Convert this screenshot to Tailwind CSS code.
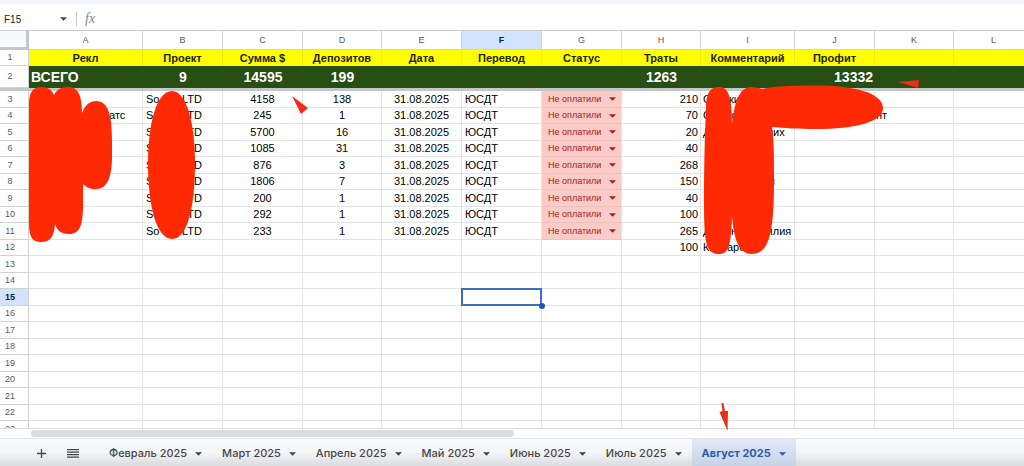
<!DOCTYPE html>
<html lang="ru">
<head>
  <meta charset="UTF-8" />
  <meta name="viewport" content="width=device-width, initial-scale=1.0"/>
  <title>Август 2025</title>
  <script src="https://cdn.jsdelivr.net/npm/@tailwindcss/browser@4"></script>
</head>
<body class="relative flex flex-col h-screen overflow-hidden bg-white font-['Liberation_Sans',Arial,sans-serif] text-black">

  <!-- Formula bar -->
  <div class="h-1 shrink-0 bg-[#f3f7fc]"></div>
  <div class="flex items-center h-[27px] shrink-0 pt-1 pl-1 border-b border-[#c9cbcd]">
    <input type="text" aria-label="Ячейка" value="F15" class="w-14 text-[10px] text-[#202124] outline-none"/>
    <svg class="w-[7px] h-[4px]" viewBox="0 0 6 3"><path d="M0 0h6L3 3z" fill="#444746"/></svg>
    <div class="w-px h-[14px] ml-[9px] bg-[#c7c9cc]"></div>
    <span class="ml-2 font-['Liberation_Serif',serif] italic text-sm leading-4 text-[#80868b]">fx</span>
  </div>

  <!-- Grid -->
  <main class="flex-1 min-h-0 overflow-hidden">
    <table class="table-fixed w-full border-separate border-spacing-0 text-[11px] leading-[15px] whitespace-nowrap">
      <colgroup>
        <col class="w-[29px]"/><col class="w-[114px]"/><col class="w-20"/><col class="w-20"/><col class="w-[79px]"/><col class="w-20"/><col class="w-20"/><col class="w-20"/><col class="w-[79px]"/><col class="w-[94px]"/><col class="w-20"/><col class="w-[79px]"/><col class="w-20"/>
      </colgroup>
      <thead id="head"></thead>
      <tbody id="rows"></tbody>
    </table>
  </main>

  <!-- Horizontal scrollbar -->
  <div class="h-[10px] shrink-0 flex items-center pl-[31px] border-t border-[#dadce0]">
    <div class="w-[483px] h-[7px] rounded-full bg-[#dadcdd]"></div>
  </div>

  <!-- Sheet tabs -->
  <footer class="flex items-stretch h-7 shrink-0 border-t border-[#e1e4e8] bg-linear-to-b from-[#f9fbfd] via-[#f3f5f8] to-[#d9dbde] font-[Inter,sans-serif] text-[11px] font-medium text-[#444746]">
    <button aria-label="Добавить лист" class="w-8 ml-[25px] pt-[2px] flex items-center justify-center">
      <svg class="w-[9px] h-[9px]" viewBox="0 0 9 9" fill="none" stroke="#444746" stroke-width="1.3"><path d="M4.500 0v9M0 4.500h9"/></svg>
    </button>
    <button aria-label="Все листы" class="w-8 pt-[2px] flex items-center justify-center">
      <svg class="w-[12px] h-[9px]" viewBox="0 0 12 9" fill="none" stroke="#444746" stroke-width="1.200"><path d="M0 .7h12M0 3.200h12M0 5.700h12M0 8.200h12"/></svg>
    </button>
    <nav id="tabs" class="flex items-stretch ml-[10px]"></nav>
  </footer>

  <!-- Red marker strokes and arrows -->
  <svg class="absolute left-0 top-0 w-[1024px] h-[466px] pointer-events-none" viewBox="0 0 1024 466" fill="#ff2a04">
    <path d="M29 104C29 92 33 87 41 87C48 87 52 90 54 95C57 89 62 87 68 87C77 87 82 93 82 113C85 105 90 101 96 101C107 101 112 112 112 140V156C112 178 107 189 96 189C90 189 86 187 83 184V205C83 225 80 234 69 234C62 234 57 231 55 224C54 236 51 242 41 242C33 242 29 238 29 224Z"/>
    <path d="M172 91C187 91 195 125 195 163C195 205 188 239 172 239C156 239 148 205 148 163C148 125 156 91 172 91Z"/>
    <path d="M706 108C706 92 711 87 719 87C727 87 732 93 732 124C735 98 741 87 751 87C755 87 759 88 762 89C775 86 794 85.500 815 85.500C855 85.500 883 93 883 108C883 122 856 129 815 129C800 129 784 128 772 127C774 142 774 155 774 180C774 230 770 254 752 254C740 254 734 242 732 216C731 245 729 254 719 254C707 254 704 246 704 205C704 165 705 130 706 108Z"/>
    <g fill="#ee2d17">
      <path d="M292 96l16 12-7 6z"/>
      <path d="M898 82l21-2-1 8z"/>
      <path d="M721.500 403h2l1.500 8 3 0-.5 20-8-19 3-1z"/>
    </g>
  </svg>

  <script>
    const CARET = '<svg class="w-[7px] h-[4px] shrink-0" viewBox="0 0 6 3"><path d="M0 0h6L3 3z" fill="currentColor"/></svg>';
    const letters = 'ABCDEFGHIJKL'.split('');
    const titles = ['Рекл', 'Проект', 'Сумма $', 'Депозитов', 'Дата', 'Перевод', 'Статус', 'Траты', 'Комментарий', 'Профит', '', ''];
    const totals = ['ВСЕГО', '9', '14595', '199', '', '', '', '1263', '', '13332', '', ''];

    // sum, deposits, spent
    const data = [
      [4158, 138, 210], [245, 1, 70], [5700, 16, 20], [1085, 31, 40], [876, 3, 268],
      [1806, 7, 150], [200, 1, 40], [292, 1, 100], [233, 1, 265]
    ];
    const names = {
      3: '<span class="inline-block w-[23px]"></span>а',
      4: '<span class="inline-block w-[78px]"></span>атс'
    };
    const notes = {
      3: '<span class="inline-block w-[26px]">С</span>ки',
      4: '<span class="inline-block w-[28px]">С</span><span class="inline-block w-[145px]">о</span>нт',
      5: '<span class="inline-block w-[64px]">Д</span>них',
      8: '<span class="inline-block w-[66px]"></span>я',
      11: '<span class="inline-block w-[28px]">Д</span><span class="inline-block w-[28px]">н</span>милия',
      12: '<span class="inline-block w-[24px]">К</span>аро'
    };

    const LINE = 'p-0 border-r border-b border-[#e2e3e3]';
    const GUTTER = 'p-0 pr-2 border-r border-b border-[#d0d2d4] text-[9px] text-center';

    const num = n => `<th scope="row" class="${GUTTER} ${n === 15 ? 'bg-[#d3e3fd] font-bold text-[#041e49]' : 'bg-white font-normal text-[#575b5f]'}">${n}</th>`;
    const cell = (html, cls = '') => `<td class="${LINE} ${cls}">${html}</td>`;

    document.getElementById('head').innerHTML =
      '<tr class="h-[19px]"><td class="p-0 bg-[#f8f9fa] border-r-3 border-b-3 border-[#c4c6c8]"></td>' +
      letters.map(l => `<th scope="col" class="p-0 border-r border-b border-[#d0d2d4] text-[9px] ${l === 'F' ? 'bg-[#d3e3fd] font-bold text-[#041e49]' : 'bg-white font-normal text-[#575b5f]'}">${l}</th>`).join('') +
      '</tr>';

    let html = '<tr class="h-4">' + num(1) +
      titles.map(t => `<th scope="col" class="p-0 border-r border-[#eded10] bg-[#ffff00] text-[11px] font-bold text-[#222200]">${t}</th>`).join('') + '</tr>';

    html += '<tr class="h-[22px]">' + num(2) +
      totals.map((t, i) => `<td class="p-0 bg-[#274e13] text-sm leading-5 font-bold text-white ${i === 0 ? 'pl-[2px]' : i === 9 ? 'text-right pr-[2px]' : 'text-center'}">${t}</td>`).join('') + '</tr>';

    // frozen rows divider
    html += '<tr class="h-[3px]"><td colspan="13" class="p-0 h-[3px] bg-[#c4c6c8]"></td></tr>';

    for (let n = 3; n <= 23; n++) {
      const d = data[n - 3];
      html += `<tr class="${n % 2 ? 'h-[17px]' : 'h-4'}">` + num(n);
      html += cell(names[n] || '', 'pl-[2px]');
      html += cell(d ? '<div class="flex justify-between w-[56px]"><span>So</span><span>LTD</span></div>' : '', 'pl-[3px]');
      html += cell(d ? d[0] : '', 'text-center');
      html += cell(d ? d[1] : '', 'text-center');
      html += cell(d ? '31.08.2025' : '', 'text-center');
      if (n === 15) {
        html += cell('<div class="absolute -left-px -top-px -right-px -bottom-px border-2 border-[#3a6fc4]"></div><div class="absolute -right-1 -bottom-1 w-[6px] h-[6px] rounded-full bg-[#1a57b8]"></div>', 'relative');
      } else {
        html += cell(d ? 'ЮСДТ' : '', 'pl-[3px]');
      }
      html += d
        ? cell(`<div class="flex items-center pl-[6px] pr-[5px] text-[#a5201c]"><select aria-label="Статус, строка ${n}" class="flex-1 min-w-0 appearance-none text-[9px] leading-[15px] outline-none"><option>Не оплатили</option></select>${CARET}</div>`, 'bg-[#fbcbc8] border-b-[#efc0bd]')
        : cell('');
      html += cell(d ? d[2] : n === 12 ? '100' : '', 'text-right pr-[2px]');
      html += cell(notes[n] || '', 'pl-[2px]');
      html += cell('') + cell('') + cell('') + '</tr>';
    }
    document.getElementById('rows').innerHTML = html;

    const months = ['Февраль', 'Март', 'Апрель', 'Май', 'Июнь', 'Июль', 'Август'];
    document.getElementById('tabs').innerHTML = months.map(m =>
      `<button class="flex items-center gap-2 pt-[2px] px-[10px] ${m === 'Август' ? 'bg-linear-to-b from-[#e1e9f7] to-[#c7d3e6] font-bold text-[#2b5cb0]' : ''}">${m} 2025${CARET}</button>`).join('');
  </script>

</body>
</html>
